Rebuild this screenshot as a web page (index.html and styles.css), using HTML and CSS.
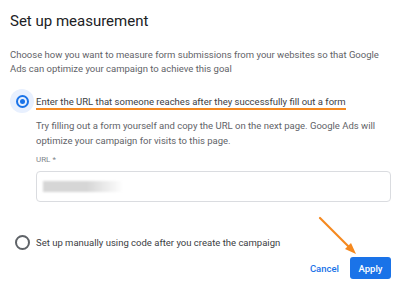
FILE: index.html
```html
<!DOCTYPE html>
<html lang="en">
<head>
    <meta charset="UTF-8">
    <title>Set up measurement</title>
    <link rel="stylesheet" href="styles.css">
</head>
<body>
    <div class="dialog">
        <h1 class="title">Set up measurement</h1>
        <p class="intro">Choose how you want to measure form submissions from your websites so that Google Ads can optimize your campaign to achieve this goal</p>

        <div class="option selected">
            <span class="radio-wrap"><span class="radio on"></span></span>
            <span class="option-label underlined">Enter the URL that someone reaches after they successfully fill out a form</span>
        </div>

        <div class="option-body">
            <p class="help">Try filling out a form yourself and copy the URL on the next page. Google Ads will optimize your campaign for visits to this page.</p>
            <div class="field-label">URL *</div>
            <div class="field">
                <span class="blurred"></span>
            </div>
        </div>

        <div class="option second">
            <span class="radio-wrap"><span class="radio"></span></span>
            <span class="option-label">Set up manually using code after you create the campaign</span>
        </div>

        <div class="actions">
            <button class="btn-text">Cancel</button>
            <button class="btn-primary">Apply</button>
        </div>

        <!-- arrow annotation pointing at Apply -->
        <svg class="arrow" width="50" height="50" viewBox="0 0 50 50">
            <line x1="4" y1="3" x2="36" y2="35" stroke="#f5891f" stroke-width="2.2" stroke-linecap="round"/>
            <polygon points="40,39 29,34 35,28" fill="#f5891f"/>
        </svg>
    </div>
</body>
</html>
```

FILE: styles.css
```css
* {
    box-sizing: border-box;
}

body {
    margin: 0;
    background: #fff;
    font-family: Roboto, Arial, sans-serif;
    color: #5f6368;
}

.dialog {
    position: relative;
    width: 400px;
    height: 284px;
    padding: 10px 9px 0 10px;
    display: flex;
    flex-direction: column;
}

.title {
    margin: 0;
    font-size: 15px;
    font-weight: 400;
    line-height: 22px;
    color: #202124;
}

.intro {
    margin: 16px 0 0;
    font-size: 9.5px;
    line-height: 14px;
}

.option {
    display: flex;
    align-items: center;
    margin-top: 13px;
}

.radio-wrap {
    flex: none;
    width: 24px;
    height: 24px;
    border-radius: 50%;
    display: flex;
    align-items: center;
    justify-content: center;
}

.selected .radio-wrap {
    background: #e8f0fe;
}

.radio {
    width: 13px;
    height: 13px;
    border: 2px solid #5f6368;
    border-radius: 50%;
    display: flex;
    align-items: center;
    justify-content: center;
}

.radio.on {
    border-color: #1a73e8;
}

.radio.on::after {
    content: "";
    width: 5px;
    height: 5px;
    border-radius: 50%;
    background: #1a73e8;
}

.option-label {
    margin-left: 2px;
    font-size: 9.5px;
    color: #3c4043;
}

.underlined {
    padding-top: 3px;
    padding-bottom: 1px;
    border-bottom: 2px solid #f5891f;
}

.option-body {
    padding-left: 26px;
}

.help {
    margin: 5px 0 0;
    font-size: 9.5px;
    line-height: 15px;
}

.field-label {
    margin-top: 7px;
    font-size: 8px;
    line-height: 10px;
    color: #80868b;
}

.field {
    margin-top: 6px;
    height: 31px;
    border: 1px solid #dadce0;
    border-radius: 4px;
    display: flex;
    align-items: center;
    padding-left: 6px;
}

.blurred {
    width: 80px;
    height: 11px;
    background: linear-gradient(to right, #d6d6d6 55%, #fff);
    filter: blur(1px);
}

.second {
    margin-top: 28px;
}

.second .radio {
    width: 15px;
    height: 15px;
    border-color: #5f6368;
}

.actions {
    display: flex;
    justify-content: flex-end;
    align-items: center;
    gap: 11px;
    margin-top: 3px;
}

.btn-text {
    border: 0;
    background: none;
    padding: 0;
    font-family: inherit;
    font-size: 9.5px;
    font-weight: 500;
    color: #1a73e8;
}

.btn-primary {
    border: 0;
    border-radius: 3px;
    background: #1a73e8;
    color: #fff;
    font-family: inherit;
    font-size: 9.5px;
    font-weight: 500;
    width: 41px;
    height: 22px;
}

.arrow {
    position: absolute;
    left: 316px;
    top: 215px;
}
```
